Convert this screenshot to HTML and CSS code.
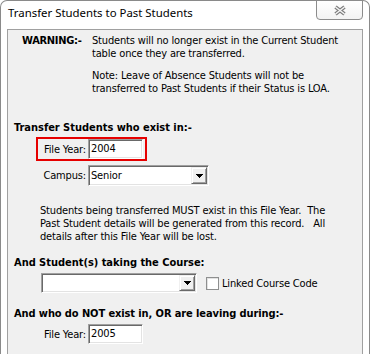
FILE: index.html
```html
<!DOCTYPE html>
<html>
<head>
<meta charset="utf-8">
<title>Transfer Students to Past Students</title>
<link rel="stylesheet" href="styles.css">
</head>
<body>
<div class="window">
  <div class="titlebar">
    <span class="title">Transfer Students to Past Students</span>
    <div class="close">
      <svg width="14" height="11" viewBox="0 0 14 11">
        <path d="M2.5 2 L11.5 9 M11.5 2 L2.5 9" stroke="#7d7d7d" stroke-width="3.6" fill="none"/>
        <path d="M2.5 2 L11.5 9 M11.5 2 L2.5 9" stroke="#f6f6f6" stroke-width="1.4" fill="none"/>
      </svg>
    </div>
  </div>
  <div class="panel">
    <div class="warning">
      <div class="warn-label">WARNING:-</div>
      <div class="warn-text">
        <p>Students will no longer exist in the Current Student<br>table once they are transferred.</p>
        <p class="note">Note: Leave of Absence Students will not be<br>transferred to Past Students if their Status is LOA.</p>
      </div>
    </div>

    <h2 class="heading h-exist">Transfer Students who exist in:-</h2>
    <div class="field highlight">
      <label>File Year:</label>
      <div class="input">2004</div>
    </div>
    <div class="field">
      <label>Campus:</label>
      <div class="combo campus">
        <span class="value">Senior</span>
        <span class="drop"><svg width="7" height="4" viewBox="0 0 7 4" shape-rendering="crispEdges"><path d="M0 0H7V1H6V2H5V3H4V4H3V3H2V2H1V1H0Z" fill="#000"/></svg></span>
      </div>
    </div>

    <p class="info">Students being transferred MUST exist in this File Year.&nbsp; The<br>Past Student details will be generated from this record.&nbsp;&nbsp; All<br>details after this File Year will be lost.</p>

    <h2 class="heading h-course">And Student(s) taking the Course:</h2>
    <div class="course-row">
      <div class="combo course">
        <span class="value"></span>
        <span class="drop"><svg width="7" height="4" viewBox="0 0 7 4" shape-rendering="crispEdges"><path d="M0 0H7V1H6V2H5V3H4V4H3V3H2V2H1V1H0Z" fill="#000"/></svg></span>
      </div>
      <span class="check"></span>
      <span class="check-label">Linked Course Code</span>
    </div>

    <h2 class="heading h-notexist">And who do NOT exist in, OR are leaving during:-</h2>
    <div class="field last">
      <label>File Year:</label>
      <div class="input">2005</div>
    </div>
  </div>
</div>
</body>
</html>
```

FILE: styles.css
```css
html, body {
  margin: 0;
  padding: 0;
  background: #ffffff;
  overflow: hidden;
}

body {
  font-family: "DejaVu Sans Condensed", "DejaVu Sans", sans-serif;
  font-stretch: condensed;
  color: #000;
}

.window {
  box-sizing: border-box;
  width: 370px;
  height: 360px;
  border: 1px solid #8a8a8a;
  border-bottom: none;
  border-radius: 7px 7px 0 0;
  background: #ffffff;
  padding: 0 6px;
  display: flex;
  flex-direction: column;
}

.titlebar {
  display: flex;
  justify-content: space-between;
  align-items: flex-start;
  height: 28px;
  flex: none;
}

.title {
  font-family: "Noto Sans", "Open Sans", "Liberation Sans", sans-serif;
  font-stretch: normal;
  font-size: 11.4px;
  line-height: 16px;
  padding-top: 4px;
  padding-left: 1px;
  color: #000;
}

.close {
  box-sizing: border-box;
  width: 47px;
  height: 20px;
  margin-top: -1px;
  border: 1px solid #8c8c8c;
  border-radius: 0 0 4px 4px;
  background: linear-gradient(#ffffff, #f3f3f3);
  display: flex;
  align-items: center;
  justify-content: center;
  padding-top: 1px;
}

.close svg {
  display: block;
}

.panel {
  flex: 1;
  border: 1px solid #a0a0a0;
  border-bottom: none;
  background: #f0f0f0;
  padding: 4px 0 0 6px;
  font-size: 11px;
  line-height: 13px;
  letter-spacing: -0.16px;
}

p {
  margin: 0;
}

.warning {
  display: grid;
  grid-template-columns: 70px auto;
  margin-left: 8px;
}

.warn-label {
  font-weight: bold;
  letter-spacing: -0.3px;
}

.note {
  margin-top: 9px;
}

.heading {
  margin: 0;
  font-size: 11px;
  line-height: 13px;
  font-weight: bold;
  letter-spacing: -0.03px;
}

.h-exist {
  margin-top: 26px;
}

.h-course {
  margin-top: 13px;
}

.h-notexist {
  margin-top: 14px;
  letter-spacing: -0.1px;
}

.field {
  display: flex;
  align-items: center;
  width: fit-content;
  margin-left: 22px;
  border: 2px solid transparent;
  margin-top: 2px;
}

.field label {
  width: 48px;
  margin-right: 2px;
  text-align: right;
  white-space: nowrap;
}

.field.highlight {
  border-color: #e60000;
  padding-right: 2px;
  margin-top: 3px;
}

.input {
  box-sizing: border-box;
  width: 55px;
  height: 20px;
  background: #ffffff;
  border: 1px solid;
  border-color: #a0a0a0 #ffffff #ffffff #a0a0a0;
  box-shadow: inset 1px 1px 0 #696969, inset -1px -1px 0 #e3e3e3;
  padding: 1px 0 0 2px;
  line-height: 16px;
}

.combo {
  box-sizing: border-box;
  display: flex;
  align-items: stretch;
  height: 21px;
  background: #ffffff;
  border: 1px solid;
  border-color: #a0a0a0 #ffffff #ffffff #a0a0a0;
  box-shadow: inset 1px 1px 0 #696969, inset -1px -1px 0 #e3e3e3;
  padding: 1px;
}

.combo .value {
  flex: 1;
  padding-left: 1px;
  line-height: 17px;
}

.combo.campus {
  width: 121px;
}

.combo.course {
  width: 156px;
  height: 20px;
}

.drop {
  box-sizing: border-box;
  width: 16px;
  background: #f0f0f0;
  border: 1px solid;
  border-color: #f0f0f0 #696969 #696969 #f0f0f0;
  box-shadow: inset 1px 1px 0 #ffffff, inset -1px -1px 0 #a0a0a0;
  display: flex;
  align-items: center;
  justify-content: center;
}

.drop svg {
  display: block;
}

.info {
  margin-top: 16px;
  margin-left: 26px;
}

.course-row {
  display: flex;
  align-items: center;
  margin-top: 4px;
  margin-left: 27px;
}

.check {
  box-sizing: border-box;
  width: 13px;
  height: 13px;
  margin-left: 9px;
  border: 1px solid #8e8f8f;
  background: #ffffff;
  box-shadow: inset 1px 1px 0 #e2e2e2;
}

.check-label {
  margin-left: 3px;
}
```
